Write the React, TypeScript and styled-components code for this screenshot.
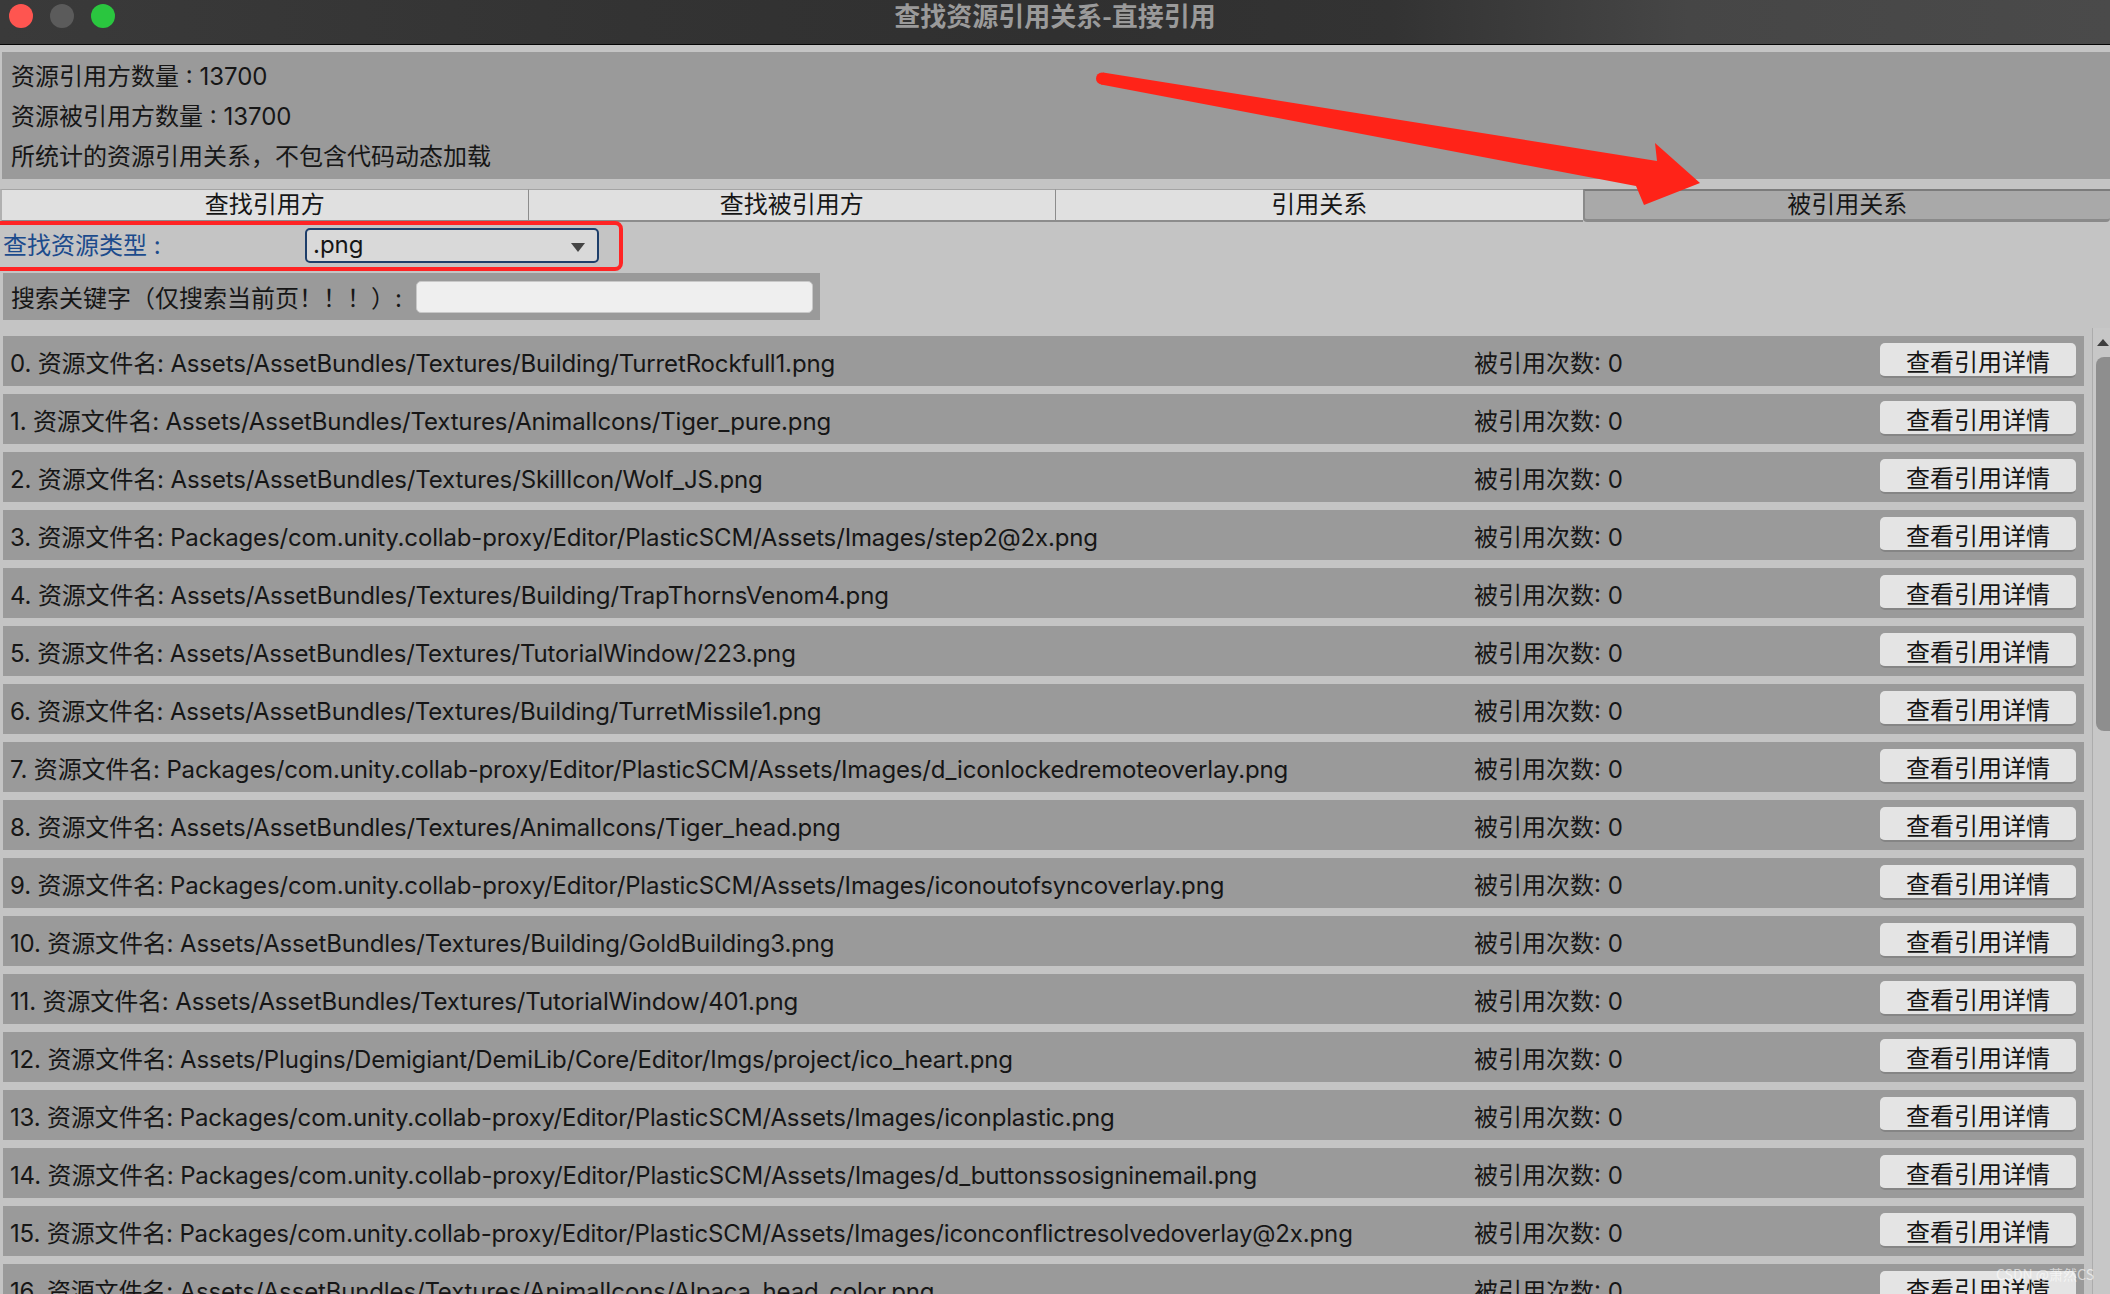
import styled, { createGlobalStyle } from "styled-components";

const GlobalStyle = createGlobalStyle`
  html, body {
    margin: 0;
    padding: 0;
    overflow: hidden;
    background: #c4c4c4;
  }
  body {
    font-family: Inter, "Noto Sans CJK SC", sans-serif;
  }
  * {
    box-sizing: border-box;
  }
`;

const assets = [
  "Assets/AssetBundles/Textures/Building/TurretRockfull1.png",
  "Assets/AssetBundles/Textures/AnimalIcons/Tiger_pure.png",
  "Assets/AssetBundles/Textures/SkillIcon/Wolf_JS.png",
  "Packages/com.unity.collab-proxy/Editor/PlasticSCM/Assets/Images/step2@2x.png",
  "Assets/AssetBundles/Textures/Building/TrapThornsVenom4.png",
  "Assets/AssetBundles/Textures/TutorialWindow/223.png",
  "Assets/AssetBundles/Textures/Building/TurretMissile1.png",
  "Packages/com.unity.collab-proxy/Editor/PlasticSCM/Assets/Images/d_iconlockedremoteoverlay.png",
  "Assets/AssetBundles/Textures/AnimalIcons/Tiger_head.png",
  "Packages/com.unity.collab-proxy/Editor/PlasticSCM/Assets/Images/iconoutofsyncoverlay.png",
  "Assets/AssetBundles/Textures/Building/GoldBuilding3.png",
  "Assets/AssetBundles/Textures/TutorialWindow/401.png",
  "Assets/Plugins/Demigiant/DemiLib/Core/Editor/Imgs/project/ico_heart.png",
  "Packages/com.unity.collab-proxy/Editor/PlasticSCM/Assets/Images/iconplastic.png",
  "Packages/com.unity.collab-proxy/Editor/PlasticSCM/Assets/Images/d_buttonssosigninemail.png",
  "Packages/com.unity.collab-proxy/Editor/PlasticSCM/Assets/Images/iconconflictresolvedoverlay@2x.png",
  "Assets/AssetBundles/Textures/AnimalIcons/Alpaca_head_color.png",
];

const tabs = ["查找引用方", "查找被引用方", "引用关系", "被引用关系"];

const Window = styled.div`
  position: relative;
  width: 2110px;
  height: 1294px;
  overflow: hidden;
  background: #c4c4c4;
  display: flex;
  flex-direction: column;
  color: #161616;
`;

const TitleBar = styled.div`
  flex: none;
  height: 45px;
  border-bottom: 1px solid #050505;
  background: linear-gradient(
    to right,
    #3a3a3a 0%,
    #333333 30%,
    #303030 50%,
    #333333 66%,
    #464646 80%,
    #4a4a4a 100%
  );
  display: grid;
  grid-template-columns: 1fr auto 1fr;
  align-items: start;
`;

const Lights = styled.div`
  display: flex;
  gap: 17px;
  padding: 4px 0 0 9px;
`;

const Light = styled.span<{ color: string }>`
  width: 24px;
  height: 24px;
  border-radius: 50%;
  background: ${({ color }) => color};
`;

const Title = styled.div`
  font-family: "Noto Sans CJK SC", sans-serif;
  font-size: 26px;
  font-weight: bold;
  line-height: 30px;
  color: #9a9a9a;
`;

const InfoPanel = styled.div`
  flex: none;
  margin: 7px 0 0 2px;
  height: 127px;
  padding: 5px 9px;
  background: #9a9a9a;
  font-size: 24px;
  line-height: 40px;
`;

const TabBar = styled.div`
  flex: none;
  margin-top: 10px;
  height: 33px;
  display: grid;
  grid-template-columns: repeat(4, 1fr);
`;

const Tab = styled.div<{ active?: boolean }>`
  height: 33px;
  display: flex;
  align-items: center;
  justify-content: center;
  font-size: 24px;
  line-height: 26px;
  border-top: 1px solid #a4a4a4;
  border-bottom: 2px solid #8c8c8c;
  border-left: 1px solid #8c8c8c;
  ${({ active }) =>
    active
      ? `background: #a9a9a9;
      border-top: 2px solid #7c7c7c;
      border-left: 2px solid #8a8a8a;
      border-bottom: 3px solid #8a8a8a;
      border-radius: 0 0 4px 4px;`
      : `background: #e0e0e0;`}
  &:first-child {
    border-left: 2px solid #b0b0b0;
  }
`;

const TypeRow = styled.div`
  flex: none;
  height: 51px;
  display: flex;
  align-items: flex-start;
  padding: 6px 0 0 3px;
`;

const TypeLabel = styled.div`
  width: 302px;
  font-size: 24px;
  line-height: 35px;
  color: #1c4b8c;
`;

const Dropdown = styled.div`
  position: relative;
  width: 294px;
  height: 35px;
  padding-left: 6px;
  border: 2px solid #1d3e6a;
  border-radius: 5px;
  background: #d9d9d9;
  font-size: 24px;
  line-height: 30px;
  &::after {
    content: "";
    position: absolute;
    right: 12px;
    top: 13px;
    border-left: 7px solid transparent;
    border-right: 7px solid transparent;
    border-top: 9px solid #444;
  }
`;

const SearchRow = styled.div`
  flex: none;
  width: 817px;
  height: 47px;
  margin-left: 3px;
  display: flex;
  align-items: center;
  justify-content: space-between;
  padding: 0 7px 0 8px;
  background: #9a9a9a;
  font-size: 24px;
`;

const SearchInput = styled.div`
  width: 397px;
  height: 32px;
  border-radius: 5px;
  border: 1px solid #c8c8c8;
  background: #efefef;
`;

const ListArea = styled.div`
  flex: 1;
  min-height: 0;
  margin-top: 8px;
  display: flex;
`;

const List = styled.div`
  flex: 1;
  padding: 8px 8px 0 3px;
  display: flex;
  flex-direction: column;
  gap: 8px;
  overflow: hidden;
`;

const Row = styled.div`
  flex: none;
  height: 50px;
  display: grid;
  grid-template-columns: 1fr 406px 196px;
  align-items: center;
  padding: 0 8px 0 7px;
  background: #9a9a9a;
  font-size: 24px;
  white-space: nowrap;
`;

const AssetName = styled.span`
  letter-spacing: -0.15px;
`;

const DetailButton = styled.button`
  height: 35px;
  margin-top: -1px;
  padding: 0 0 2px;
  border: none;
  border-bottom: 2px solid #858585;
  border-radius: 5px;
  background: #e4e4e4;
  font-family: "Noto Sans CJK SC", sans-serif;
  font-size: 24px;
  color: #151515;
`;

const Scrollbar = styled.div`
  flex: none;
  width: 18px;
  border-left: 1px solid #acacac;
  background: #c7c7c7;
  display: flex;
  flex-direction: column;
  align-items: flex-end;
  padding-top: 11px;
`;

const UpArrow = styled.span`
  margin-right: 1px;
  border-left: 6px solid transparent;
  border-right: 6px solid transparent;
  border-bottom: 7px solid #3e3e3e;
`;

const Thumb = styled.div`
  margin-top: 11px;
  width: 14px;
  height: 374px;
  border-radius: 8px 0 0 8px;
  background: #8e8e8e;
`;

const RedFrame = styled.div`
  position: absolute;
  left: -10px;
  top: 221px;
  width: 633px;
  height: 50px;
  border: 4px solid #ff2424;
  border-radius: 8px;
  pointer-events: none;
`;

const ArrowLayer = styled.svg`
  position: absolute;
  left: 0;
  top: 0;
  pointer-events: none;
`;

const Watermark = styled.div`
  position: absolute;
  right: 16px;
  bottom: 10px;
  font-family: "Noto Sans CJK SC", sans-serif;
  font-size: 14px;
  color: rgba(255, 255, 255, 0.6);
`;

const App = () => {
  return (
    <Window>
      <GlobalStyle />
      <TitleBar>
        <Lights>
          <Light color="#fe5550" />
          <Light color="#5b5b5b" />
          <Light color="#2ac63f" />
        </Lights>
        <Title>查找资源引用关系-直接引用</Title>
        <div />
      </TitleBar>
      <InfoPanel>
        <div>资源引用方数量 : 13700</div>
        <div>资源被引用方数量 : 13700</div>
        <div>所统计的资源引用关系，不包含代码动态加载</div>
      </InfoPanel>
      <TabBar>
        {tabs.map((t, i) => (
          <Tab key={t} active={i === 3}>
            {t}
          </Tab>
        ))}
      </TabBar>
      <TypeRow>
        <TypeLabel>查找资源类型 :</TypeLabel>
        <Dropdown>.png</Dropdown>
      </TypeRow>
      <SearchRow>
        <span>搜索关键字（仅搜索当前页！！！）:</span>
        <SearchInput />
      </SearchRow>
      <ListArea>
        <List>
          {assets.map((path, i) => (
            <Row key={path}>
              <AssetName>
                {i}. 资源文件名: {path}
              </AssetName>
              <span>被引用次数: 0</span>
              <DetailButton>查看引用详情</DetailButton>
            </Row>
          ))}
        </List>
        <Scrollbar>
          <UpArrow />
          <Thumb />
        </Scrollbar>
      </ListArea>

      <RedFrame />
      <ArrowLayer width="2110" height="1294" viewBox="0 0 2110 1294">
        <circle cx="1102" cy="78.5" r="6" fill="#ff2318" />
        <polygon
          points="1103,72.5 1657,161 1655,143 1700,183 1644,205 1636,186 1101,84.5"
          fill="#ff2318"
        />
      </ArrowLayer>
      <Watermark>CSDN @萧然CS</Watermark>
    </Window>
  );
};

export default App;
